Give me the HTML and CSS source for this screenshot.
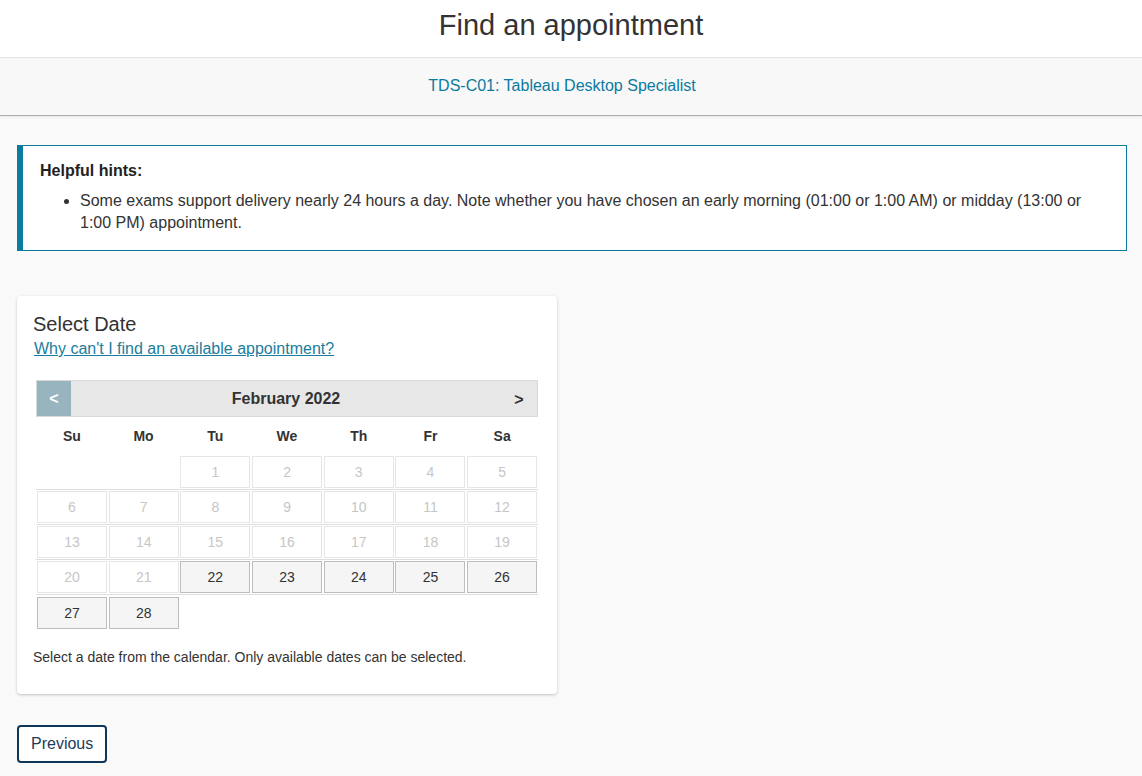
FILE: index.html
```html
<!DOCTYPE html>
<html lang="en">
<head>
<meta charset="utf-8">
<title>Find an appointment</title>
<link rel="stylesheet" href="styles.css">
</head>
<body>
<header class="top">
  <h1 class="title">Find an appointment</h1>
</header>
<div class="subhead">
  <span class="exam">TDS-C01: Tableau Desktop Specialist</span>
</div>
<main class="main">
  <section class="hints">
    <h2 class="hints-title">Helpful hints:</h2>
    <ul class="hints-list">
      <li>Some exams support delivery nearly 24 hours a day. Note whether you have chosen an early morning (01:00 or 1:00 AM) or midday (13:00 or 1:00 PM) appointment.</li>
    </ul>
  </section>

  <section class="card">
    <h2 class="card-title">Select Date</h2>
    <a class="why" href="#">Why can't I find an available appointment?</a>

    <div class="calendar">
      <div class="cal-head">
        <button class="nav prev" type="button">&lt;</button>
        <span class="month">February 2022</span>
        <button class="nav next" type="button">&gt;</button>
      </div>
      <div class="dow">
        <span>Su</span><span>Mo</span><span>Tu</span><span>We</span><span>Th</span><span>Fr</span><span>Sa</span>
      </div>
      <div class="week first">
        <span class="empty"></span><span class="empty"></span>
        <span class="day off">1</span><span class="day off">2</span><span class="day off">3</span><span class="day off">4</span><span class="day off">5</span>
      </div>
      <div class="week">
        <span class="day off">6</span><span class="day off">7</span><span class="day off">8</span><span class="day off">9</span><span class="day off">10</span><span class="day off">11</span><span class="day off">12</span>
      </div>
      <div class="week">
        <span class="day off">13</span><span class="day off">14</span><span class="day off">15</span><span class="day off">16</span><span class="day off">17</span><span class="day off">18</span><span class="day off">19</span>
      </div>
      <div class="week">
        <span class="day off">20</span><span class="day off">21</span><span class="day on">22</span><span class="day on">23</span><span class="day on">24</span><span class="day on">25</span><span class="day on">26</span>
      </div>
      <div class="week last">
        <span class="day on">27</span><span class="day on">28</span>
      </div>
    </div>

    <p class="note">Select a date from the calendar. Only available dates can be selected.</p>
  </section>

  <button class="btn-prev" type="button">Previous</button>
</main>
</body>
</html>
```

FILE: styles.css
```css
* { box-sizing: border-box; }

html, body {
  margin: 0;
  padding: 0;
  background: #f9f9f9;
  font-family: "Liberation Sans", Arial, sans-serif;
  color: #333;
}

.top {
  background: #fff;
  height: 58px;
  border-bottom: 1px solid #e2e2e2;
  display: flex;
  align-items: center;
  justify-content: center;
}

.title {
  margin: 0;
  font-size: 29px;
  font-weight: normal;
  color: #333;
  line-height: 32px;
  position: relative;
  top: -4px;
}

.subhead {
  height: 58px;
  background: #f8f8f8;
  border-bottom: 1px solid #aeaeae;
  box-shadow: 0 1px 2px rgba(0, 0, 0, 0.08);
  display: flex;
  align-items: center;
  justify-content: center;
  padding-right: 18px;
  padding-bottom: 2px;
}

.exam {
  font-size: 16px;
  color: #0b7aa0;
}

.main {
  padding: 29px 17px 0 17px;
  display: flex;
  flex-direction: column;
  align-items: flex-start;
}

.hints {
  width: 1110px;
  background: #fff;
  border: 1px solid #0c7c9d;
  border-left: 6px solid #0c7c9d;
  padding: 14px 16px 16px 17px;
}

.hints-title {
  margin: 0;
  font-size: 16px;
  font-weight: bold;
  line-height: 22px;
  color: #222;
}

.hints-list {
  margin: 8px 0 0 0;
  padding-left: 40px;
  font-size: 16px;
  line-height: 22px;
  color: #333;
}

.card {
  margin-top: 45px;
  width: 540px;
  background: #fff;
  border-radius: 4px;
  box-shadow: 0 1px 3px rgba(0, 0, 0, 0.22);
  padding: 16px 16px 16px 16px;
}

.card-title {
  margin: 0;
  font-size: 20px;
  font-weight: normal;
  line-height: 24px;
  color: #333;
}

.why {
  display: inline-block;
  margin-top: 2px;
  font-size: 16px;
  line-height: 22px;
  color: #1a7d9d;
  text-decoration: underline;
  margin-left: 1px;
}

.calendar {
  margin: 20px 3px 0 3px;
}

.cal-head {
  height: 37px;
  background: #e7e7e7;
  border: 1px solid #d9d9d9;
  display: flex;
  align-items: stretch;
}

.nav {
  border: 0;
  margin: 0;
  padding: 0;
  font-family: inherit;
  font-size: 16px;
  font-weight: bold;
  background: transparent;
  cursor: pointer;
}

.prev {
  width: 34px;
  background: #98b5bf;
  color: #fff;
}

.month {
  flex: 1;
  display: flex;
  align-items: center;
  justify-content: center;
  font-size: 16px;
  font-weight: bold;
  color: #333;
}

.next {
  width: 36px;
  color: #333;
  padding-top: 3px;
}

.dow {
  display: grid;
  grid-template-columns: repeat(7, 1fr);
  height: 37px;
  align-items: center;
  font-size: 14px;
  font-weight: bold;
  text-align: center;
  color: #333;
}

.week {
  display: grid;
  grid-template-columns: repeat(7, 70px);
  column-gap: 1.7px;
  padding: 1px 0 1px 1px;
  border-top: 1px solid #dedede;
}

.week.first {
  border-top: 1px solid transparent;
}

.week.last {
  padding-top: 2px;
}

.day, .empty {
  height: 32px;
  display: flex;
  align-items: center;
  justify-content: center;
  font-size: 14px;
}

.day.off {
  border: 1px solid #e6e6e6;
  color: #c6c6c6;
  background: #fff;
}

.day.on {
  border: 1px solid #bdbdbd;
  background: #f5f5f5;
  color: #333;
}

.note {
  margin: 18px 0 12px 0;
  font-size: 14px;
  line-height: 18px;
  color: #333;
}

.btn-prev {
  margin-top: 31px;
  height: 38px;
  padding: 0 12px;
  background: #fff;
  border: 2px solid #0e3658;
  border-radius: 4px;
  font-family: inherit;
  font-size: 16px;
  color: #1c3c5c;
  cursor: pointer;
}
```
